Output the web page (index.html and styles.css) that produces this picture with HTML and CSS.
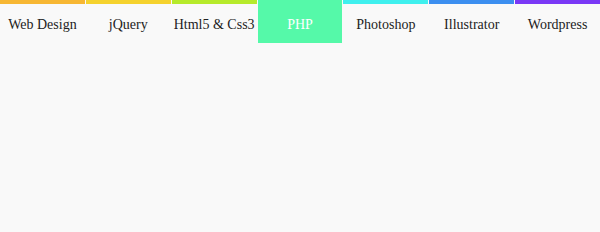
FILE: index.html
```html
<!DOCTYPE html>
<html lang="en">
<head>
<meta charset="UTF-8">
<title>Menu</title>
<link rel="stylesheet" href="styles.css">
</head>
<body>
<ul class="menu">
    <li class="item c1"><a href="#">Web Design</a></li>
    <li class="item c2"><a href="#">jQuery</a></li>
    <li class="item c3"><a href="#">Html5 &amp; Css3</a></li>
    <li class="item c4 active"><a href="#">PHP</a></li>
    <li class="item c5"><a href="#">Photoshop</a></li>
    <li class="item c6"><a href="#">Illustrator</a></li>
    <li class="item c7"><a href="#">Wordpress</a></li>
</ul>
</body>
</html>
```

FILE: styles.css
```css
body{
    margin: 0;
    background: #f9f9f9;
    font-family: "Liberation Serif", "DejaVu Serif", serif;
}
ul{
    margin: 0;
    padding: 0;
    list-style: none;
}
.menu{
    display: flex;
    gap: 1px;
    width: 600px;
}
.item{
    flex: 1;
    border-top: 4px solid #ccc;
    height: 39px;
}
.item a{
    display: block;
    line-height: 41px;
    text-align: center;
    color: #222;
    font-size: 14px;
    text-decoration: none;
    white-space: nowrap;
}
.c1{ border-color: #f7b733; }
.c2{ border-color: #f5d22e; }
.c3{ border-color: #b6ea2b; }
.c4{ border-color: #55f9a9; }
.c5{ border-color: #3ff0ee; }
.c6{ border-color: #3c8ff0; }
.c7{ border-color: #7a38f6; }
.active{
    background: #55f9a9;
}
.active a{
    color: #fff;
}
```
